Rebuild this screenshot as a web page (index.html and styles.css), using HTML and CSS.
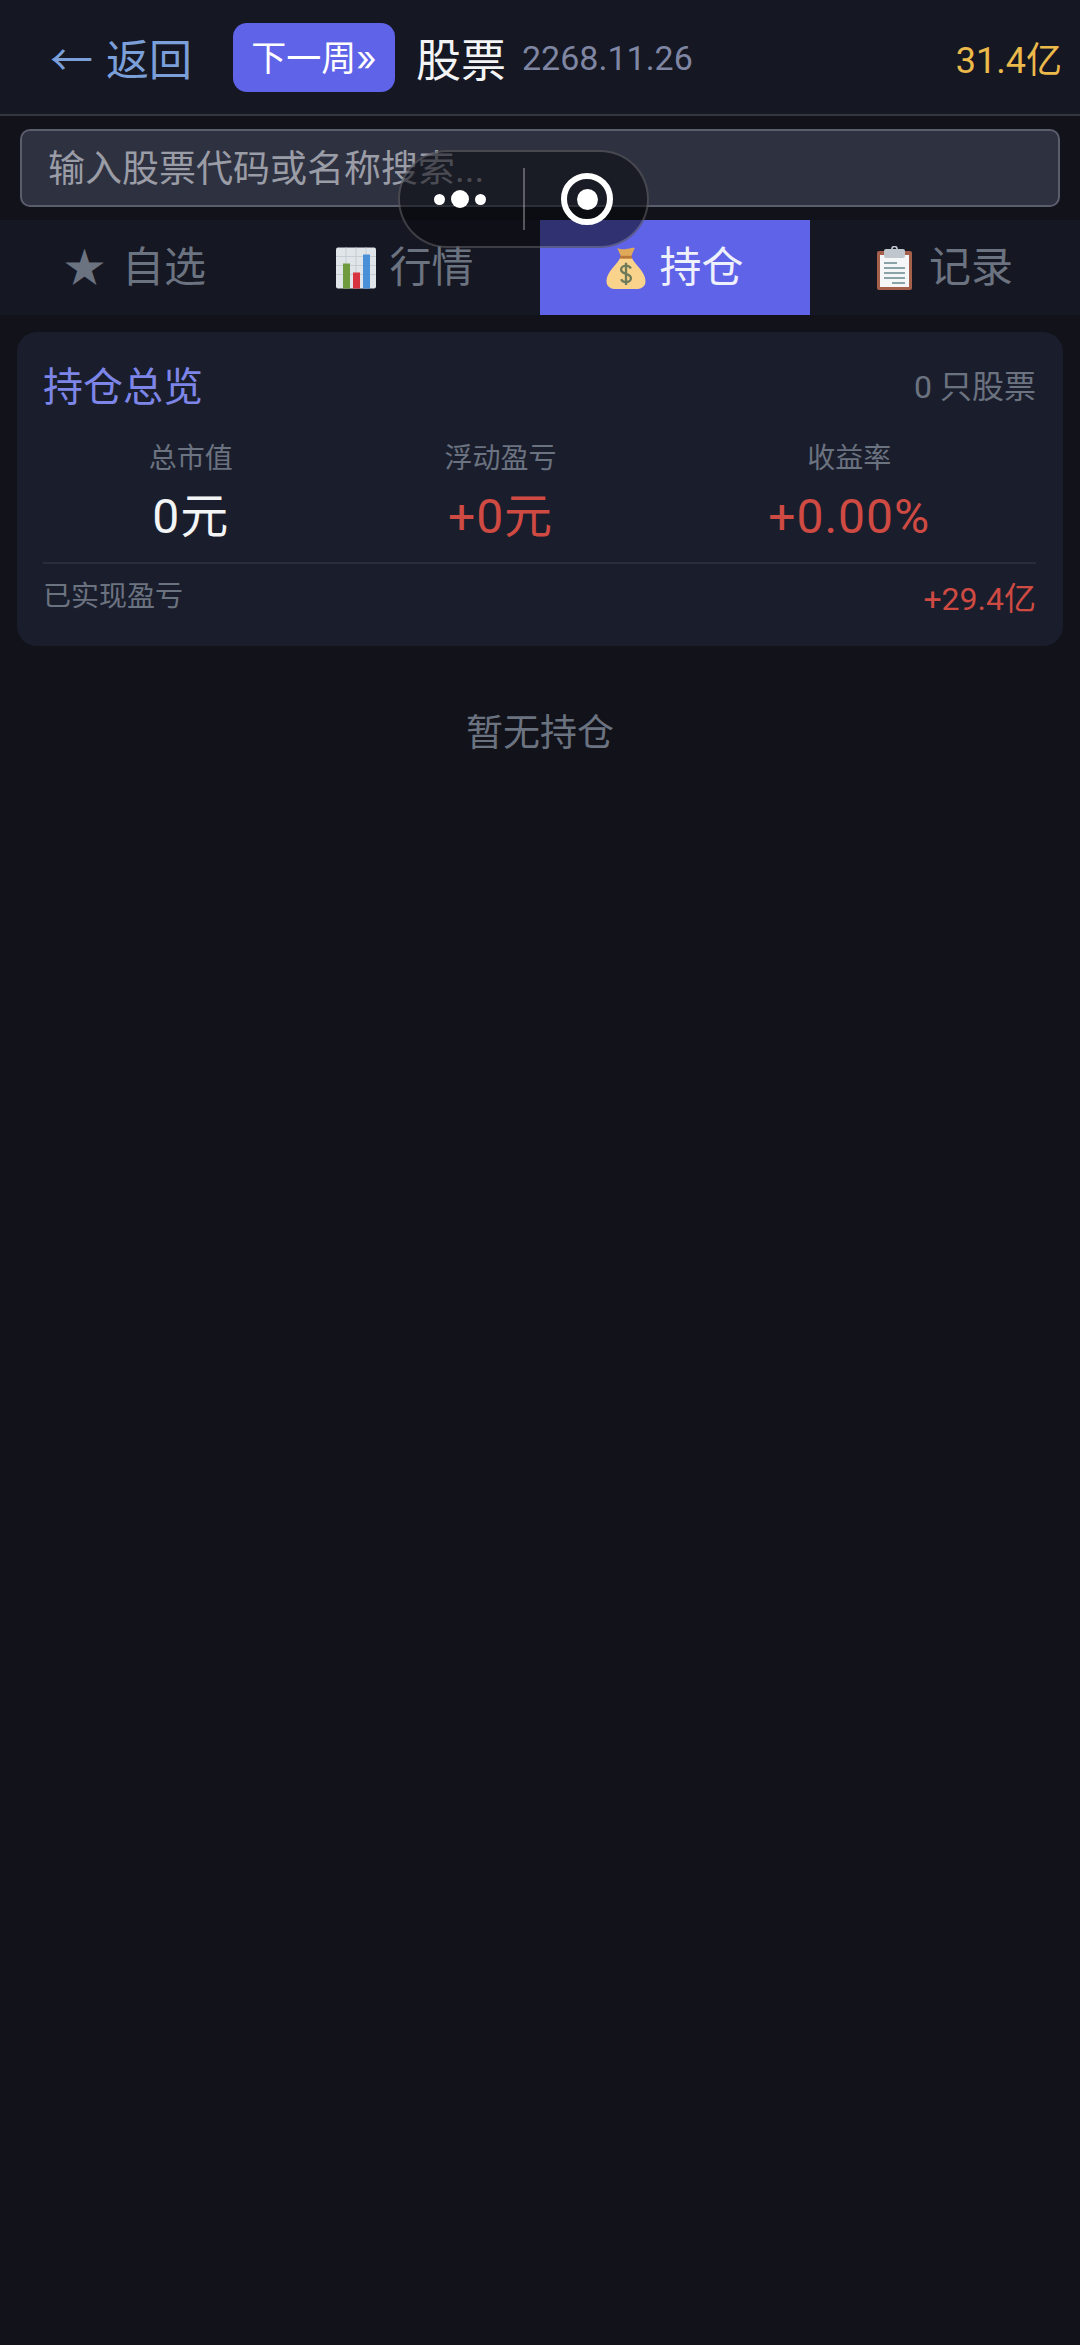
FILE: index.html
```html
<!DOCTYPE html>
<html lang="zh-CN">
<head>
    <meta charset="UTF-8">
    <meta name="viewport" content="width=device-width, initial-scale=1.0">
    <title>股票</title>
    <link rel="stylesheet" href="styles.css">
</head>
<body>
    <div class="top-bar">
        <div class="back"><span class="back-arrow">←</span>返回</div>
        <div class="next-week">下一周»</div>
        <div class="page-title">股票</div>
        <div class="game-date">2268.11.26</div>
        <div class="balance">31.4亿</div>
    </div>

    <div class="search-row">
        <div class="search-box">输入股票代码或名称搜索...</div>
    </div>

    <div class="tabs">
        <div class="tab"><span class="star">★</span>自选</div>
        <div class="tab">
            <svg class="tab-icon" viewBox="0 0 40 41">
                <rect width="40" height="41" rx="2" fill="#dfe5e8"/>
                <path d="M0 9h40M0 18h40M0 27h40M10 0v41M20 0v41M30 0v41" stroke="#c6ced3" stroke-width="1"/>
                <rect x="7" y="16" width="7" height="25" fill="#6f9a3e"/>
                <rect x="17" y="25" width="7" height="16" fill="#d8343f"/>
                <rect x="27" y="7" width="7" height="34" fill="#4a90d9"/>
            </svg>
            行情
        </div>
        <div class="tab active">
            <svg class="tab-icon" viewBox="0 0 40 43">
                <path d="M11 1c3 1 5 2 9 1 3 0 6-2 9-1l-4 9H15z" fill="#e0a95a"/>
                <path d="M14 11h12c2 6 14 14 14 24 0 6-5 8-10 8H10C5 43 0 41 0 35c0-10 12-18 14-24z" fill="#f9d38c"/>
                <path d="M14 9h12v3H14z" fill="#b9783a"/>
                <path d="M25 22c-1-2-3-3-5-3-3 0-5 2-5 4 0 6 10 3 10 9 0 2-2 4-5 4-2 0-4-1-5-3M20 16v23" fill="none" stroke="#6d7a5a" stroke-width="2.4"/>
            </svg>
            持仓
        </div>
        <div class="tab">
            <svg class="tab-icon clip-icon" viewBox="0 0 35 44">
                <rect x="0" y="5" width="35" height="39" rx="2" fill="#a5604c"/>
                <rect x="3" y="9" width="29" height="32" fill="#f4f6f7"/>
                <rect x="7" y="3" width="21" height="9" rx="2" fill="#bfc7cc"/>
                <circle cx="17.5" cy="3" r="2.6" fill="none" stroke="#bfc7cc" stroke-width="1.6"/>
                <path d="M7 17h13M7 22h21M7 27h21M7 32h21M15 37h13" stroke="#8aa3a8" stroke-width="2"/>
            </svg>
            记录
        </div>
    </div>

    <div class="content">
        <div class="card">
            <div class="card-head">
                <div class="card-title">持仓总览</div>
                <div class="card-count">0 只股票</div>
            </div>
            <div class="stats">
                <div class="stat">
                    <div class="stat-label">总市值</div>
                    <div class="stat-value">0元</div>
                </div>
                <div class="stat">
                    <div class="stat-label">浮动盈亏</div>
                    <div class="stat-value red">+0元</div>
                </div>
                <div class="stat">
                    <div class="stat-label">收益率</div>
                    <div class="stat-value red">+0.00%</div>
                </div>
            </div>
            <div class="realized">
                <div class="realized-label">已实现盈亏</div>
                <div class="realized-value red">+29.4亿</div>
            </div>
        </div>
        <div class="empty">暂无持仓</div>
    </div>

    <!-- floating capsule sits over the search box and tabs -->
    <div class="capsule">
        <div class="capsule-dots">
            <span class="dot"></span>
            <span class="dot big"></span>
            <span class="dot"></span>
        </div>
        <div class="capsule-line"></div>
        <div class="capsule-ring"><span class="ring-dot"></span></div>
    </div>
</body>
</html>
```

FILE: styles.css
```css
* {
    box-sizing: border-box;
}
body {
    margin: 0;
    height: 2345px;
    overflow: hidden;
    background-color: #11121a;
    color: #fff;
    font-family: Roboto, "Noto Sans CJK SC", sans-serif;
    position: relative;
}

.top-bar {
    height: 116px;
    display: flex;
    align-items: center;
    background-color: #151722;
    border-bottom: 2px solid #33363f;
    padding: 0 18px 0 50px;
}
.back {
    font-size: 43px;
    color: #7a9fd9;
    width: 183px;
}
.back-arrow {
    font-family: "Noto Sans CJK SC", sans-serif;
    margin-right: 13px;
}
.next-week {
    width: 162px;
    height: 69px;
    line-height: 71px;
    margin-top: 1px;
    text-align: center;
    font-family: Inter, "Noto Sans CJK SC", sans-serif;
    font-size: 35px;
    background-color: #5f63e8;
    border-radius: 14px;
    margin-right: 21px;
}
.page-title {
    font-size: 45px;
    color: #f3f4f6;
    margin-right: 16px;
}
.game-date {
    font-size: 34px;
    color: #7f86a3;
    padding-top: 2px;
}
.balance {
    margin-left: auto;
    font-size: 36px;
    color: #ecb94b;
}

.search-row {
    height: 104px;
    padding: 13px 20px 0;
    background-color: #11121a;
}
.search-box {
    height: 78px;
    line-height: 78px;
    padding-left: 26px;
    font-size: 37px;
    color: #9a9ca6;
    background-color: #2e3140;
    border: 2px solid #5a5d6b;
    border-radius: 10px;
}

.tabs {
    height: 95px;
    display: flex;
    background-color: #151722;
}
.tab {
    flex: 1;
    display: flex;
    align-items: center;
    justify-content: center;
    font-size: 42px;
    line-height: 60px;
    color: #6b7280;
}
.tab.active {
    background-color: #5f63e8;
    color: #eef0fb;
}
.star {
    font-size: 41px;
    margin-right: 17px;
}
.tab-icon {
    width: 40px;
    height: 42px;
    margin-right: 13px;
}
.clip-icon {
    width: 35px;
    height: 44px;
    margin-right: 17px;
}

.content {
    padding: 17px 17px 0;
}
.card {
    height: 314px;
    padding: 23px 27px 0 26px;
    background-color: #1a1e2c;
    border-radius: 20px;
}
.card-head {
    display: flex;
    justify-content: space-between;
    align-items: center;
    height: 58px;
}
.card-title {
    font-size: 40px;
    color: #7d86e8;
}
.card-count {
    font-size: 32px;
    color: #6b7280;
}
.stats {
    display: flex;
    justify-content: space-around;
    margin-top: 26px;
    height: 125px;
    border-bottom: 2px solid #282d3b;
}
.stat {
    text-align: center;
}
.stat-label {
    font-size: 28px;
    line-height: 40px;
    color: #6b7280;
}
.stat-value {
    font-size: 48px;
    line-height: 66px;
    margin-top: 5px;
    letter-spacing: 1px;
    color: #f3f4f6;
}
.red {
    color: #cf4a42;
}
.realized {
    display: flex;
    justify-content: space-between;
    align-items: center;
    padding-top: 5px;
}
.realized-label {
    font-size: 28px;
    color: #6b7280;
}
.realized-value {
    font-size: 32px;
    padding-top: 4px;
}
.empty {
    margin-top: 63px;
    text-align: center;
    font-size: 37px;
    line-height: 50px;
    color: #6b7280;
}

.capsule {
    position: absolute;
    left: 398px;
    top: 150px;
    width: 251px;
    height: 98px;
    display: flex;
    align-items: center;
    background-color: rgba(10, 10, 14, 0.55);
    border: 2px solid rgba(255, 255, 255, 0.2);
    border-radius: 49px;
}
.capsule-dots {
    width: 123px;
    display: flex;
    align-items: center;
    justify-content: flex-end;
    gap: 6px;
    padding-right: 37px;
}
.dot {
    width: 11px;
    height: 11px;
    border-radius: 50%;
    background-color: #fff;
}
.dot.big {
    width: 18px;
    height: 18px;
}
.capsule-line {
    width: 2px;
    height: 62px;
    background-color: rgba(255, 255, 255, 0.3);
}
.capsule-ring {
    width: 52px;
    height: 52px;
    margin-left: 36px;
    border: 6px solid #fff;
    border-radius: 50%;
    display: flex;
    align-items: center;
    justify-content: center;
}
.ring-dot {
    width: 21px;
    height: 21px;
    border-radius: 50%;
    background-color: #fff;
}
```
